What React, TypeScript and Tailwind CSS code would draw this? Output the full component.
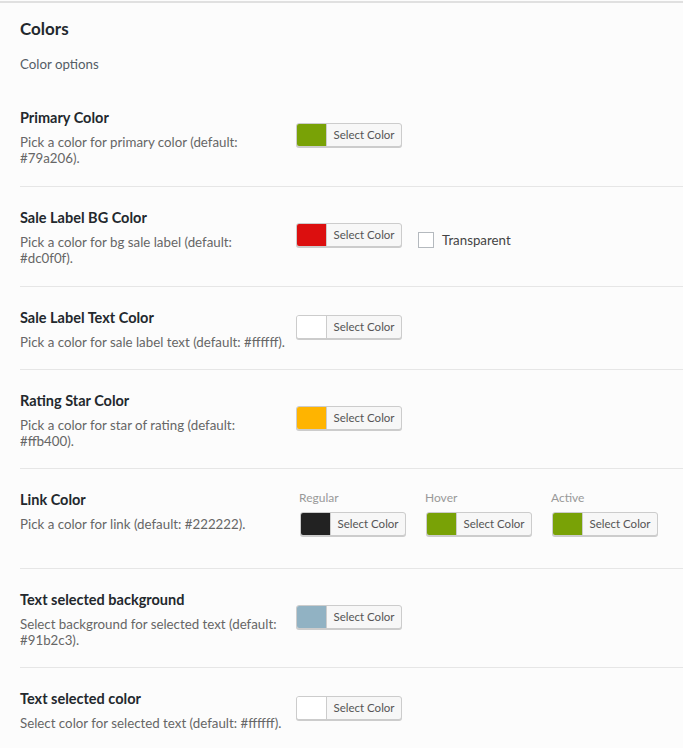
import React from "react";

const font = { fontFamily: 'Lato, "Open Sans", sans-serif' };

function ColorButton({ color }: { color: string }) {
  return (
    <div className="flex h-[24px] w-[106px] shrink-0 overflow-hidden rounded-[3px] border border-[#cccccc] bg-[#f7f7f7] shadow-[0_1px_0_#cccccc]">
      <div className="h-full w-[30px] shrink-0 border-r border-[#cccccc]" style={{ backgroundColor: color }} />
      <div className="flex flex-1 items-center justify-center text-[11.5px] leading-none text-[#555555]">Select Color</div>
    </div>
  );
}

function Row({
  title,
  desc,
  first,
  rowClass,
  children,
}: {
  title: string;
  desc: string[];
  first?: boolean;
  rowClass: string;
  children: React.ReactNode;
}) {
  return (
    <div className={`flex pt-[21px] ${rowClass} ${first ? "" : "border-t border-[#e6e6e6]"}`}>
      <div className="w-[276px] shrink-0">
        <div className="text-[14.5px] font-bold leading-[20px] text-[#23282d]">{title}</div>
        <div className="mt-[6px] whitespace-nowrap text-[13.3px] leading-[16px] text-[#666666]">
          {desc.map((d, i) => (
            <React.Fragment key={i}>
              {i > 0 && <br />}
              {d}
            </React.Fragment>
          ))}
        </div>
      </div>
      <div className="flex">{children}</div>
    </div>
  );
}

export default function App() {
  return (
    <div className="min-h-[748px] bg-[#fcfcfc] pt-[1px]" style={font}>
      <div className="border-t-2 border-[#e0e0e0] pl-[20px]">
        <div className="pt-[14px] text-[17px] font-bold leading-[24px] text-[#23282d]">Colors</div>
        <div className="mt-[15px] text-[13.3px] leading-[16px] text-[#555d66]">Color options</div>
        <div className="mt-[15px]">
          <Row first rowClass="items-center pb-[20px]" title="Primary Color" desc={["Pick a color for primary color (default:", "#79a206)."]}>
            <div className="pb-[4px]">
              <ColorButton color="#79a206" />
            </div>
          </Row>
          <Row rowClass="items-center pb-[20px]" title="Sale Label BG Color" desc={["Pick a color for bg sale label (default:", "#dc0f0f)."]}>
            <div className="flex items-start pb-[4px]">
              <ColorButton color="#dc0f0f" />
              <div className="ml-[16px] mt-[9px] flex items-center">
                <div className="h-[16px] w-[16px] border border-[#b4b9be] bg-white" />
                <span className="ml-[8px] text-[13.3px] leading-[16px] text-[#444444]">Transparent</span>
              </div>
            </div>
          </Row>
          <Row rowClass="items-center pb-[19px]" title="Sale Label Text Color" desc={["Pick a color for sale label text (default: #ffffff)."]}>
            <div className="pb-[4px]">
              <ColorButton color="#ffffff" />
            </div>
          </Row>
          <Row rowClass="items-center pb-[19px]" title="Rating Star Color" desc={["Pick a color for star of rating (default:", "#ffb400)."]}>
            <div className="pb-[4px]">
              <ColorButton color="#ffb400" />
            </div>
          </Row>
          <Row rowClass="items-start pb-[32px]" title="Link Color" desc={["Pick a color for link (default: #222222)."]}>
            <div className="flex gap-[20px] pl-[4px]">
              {[
                ["Regular", "#222222"],
                ["Hover", "#79a206"],
                ["Active", "#79a206"],
              ].map(([label, c]) => (
                <div key={label} className="flex flex-col">
                  <div className="-ml-[1px] text-[12px] leading-[16px] text-[#999999]">{label}</div>
                  <div className="mt-[6px]">
                    <ColorButton color={c} />
                  </div>
                </div>
              ))}
            </div>
          </Row>
          <Row rowClass="items-center pb-[19px]" title="Text selected background" desc={["Select background for selected text (default:", "#91b2c3)."]}>
            <div className="pb-[4px]">
              <ColorButton color="#91b2c3" />
            </div>
          </Row>
          <Row rowClass="items-center pb-[20px]" title="Text selected color" desc={["Select color for selected text (default: #ffffff)."]}>
            <div className="pb-[4px]">
              <ColorButton color="#ffffff" />
            </div>
          </Row>
        </div>
      </div>
    </div>
  );
}
